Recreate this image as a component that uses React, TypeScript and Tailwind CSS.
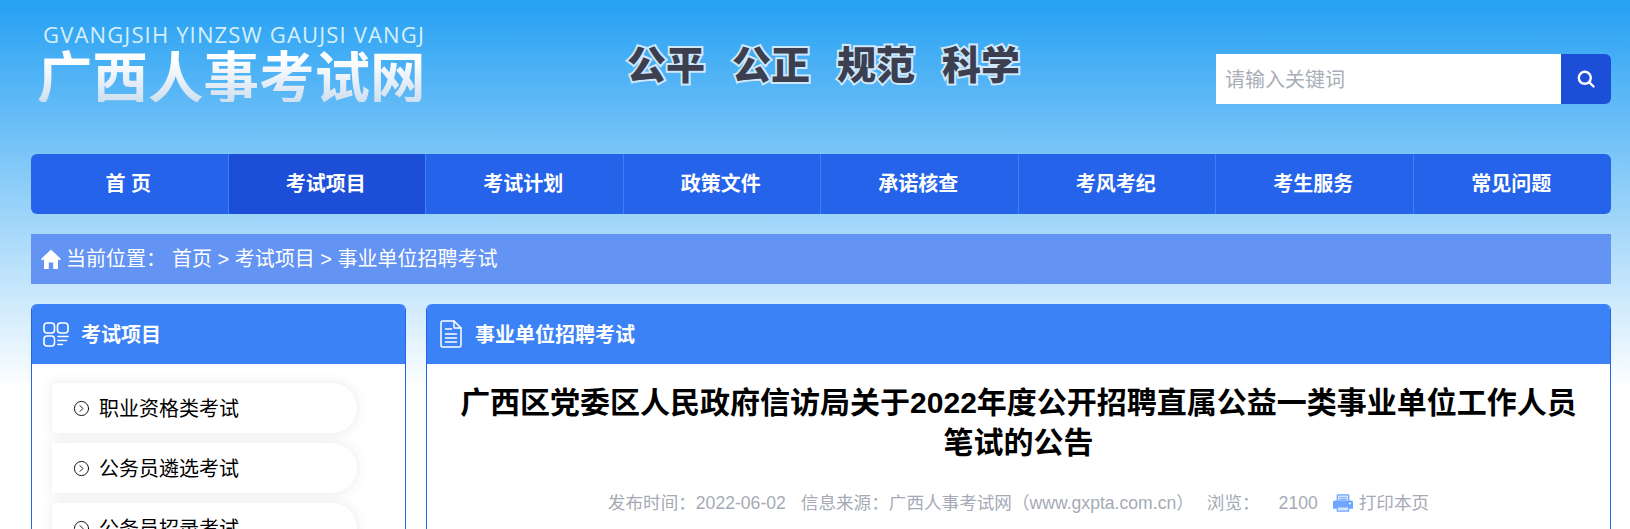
import { CircleChevronRight } from 'lucide-react';

const NAV = ['首 页', '考试项目', '考试计划', '政策文件', '承诺核查', '考风考纪', '考生服务', '常见问题'];
const EXAMS = ['职业资格类考试', '公务员遴选考试', '公务员招录考试'];

function SearchIcon() {
  return (
    <svg width="18" height="18" viewBox="0 0 18 18" fill="none" stroke="white" strokeWidth="2.4" strokeLinecap="round">
      <circle cx="7.8" cy="7.8" r="6" />
      <path d="M12.5 12.5L16.5 16.5" />
    </svg>
  );
}

function HomeIcon() {
  return (
    <svg width="20" height="20" viewBox="0 0 20 20" fill="white" className="mb-[1px] mr-[5px] shrink-0">
      <path d="M10 0.5L20 10L18.6 11.4L17 10V20H12.2V13.5H7.8V20H3V10L1.4 11.4L0 10Z" />
    </svg>
  );
}

function PrintIcon() {
  return (
    <svg width="20" height="18" viewBox="0 0 21 18" className="ml-[15px] shrink-0">
      <path d="M4.5 7V1.2C4.5 0.8 4.8 0.5 5.2 0.5H15.8C16.2 0.5 16.5 0.8 16.5 1.2V7" fill="#d5e4ff" stroke="#6ea5ff" strokeWidth="1.4" />
      <path d="M6.5 3.5H14.5M6.5 5.5H14.5" stroke="#6ea5ff" strokeWidth="1" />
      <path d="M2 6.5H19C20.1 6.5 21 7.4 21 8.5V15H0V8.5C0 7.4 0.9 6.5 2 6.5Z" fill="#6ea5ff" />
      <circle cx="17.8" cy="9.5" r="1" fill="white" />
      <path d="M4.5 13H16.5V17.5H4.5Z" fill="#d5e4ff" stroke="#6ea5ff" strokeWidth="1.2" />
    </svg>
  );
}

function GridIcon() {
  return (
    <svg width="26" height="25" viewBox="0 0 26 25" fill="none" stroke="white" strokeWidth="1.6" strokeLinecap="round" className="shrink-0">
      <rect x="1" y="1" width="10.5" height="10" rx="3" />
      <rect x="14.5" y="1" width="10.5" height="10" rx="3" />
      <rect x="1" y="14" width="10.5" height="10" rx="3" />
      <path d="M15 14.5H25M15 18.5H23.5M15 22.5H19.5" />
    </svg>
  );
}

function DocIcon() {
  return (
    <svg width="22" height="28" viewBox="0 0 22 28" fill="none" stroke="white" strokeWidth="1.5" strokeLinecap="round" strokeLinejoin="round" className="shrink-0">
      <path d="M2.5 1H14L21 8V25.5C21 26.4 20.4 27 19.5 27H2.5C1.6 27 1 26.4 1 25.5V2.5C1 1.6 1.6 1 2.5 1Z" />
      <path d="M14 1V8H21M5.5 9H11.5M5.5 14H16.5M5.5 18H16.5M5.5 22H16.5" />
    </svg>
  );
}

export default function App() {
  return (
    <div className="h-[529px] overflow-hidden bg-[linear-gradient(180deg,#25a0f3_0px,#ffffff_390px)] font-['Liberation_Sans','Noto_Sans_CJK_SC',sans-serif]">
      <div className="ml-[31px] w-[1580px]">
        <header className="flex h-[154px] items-start">
          <div className="ml-[6px] mt-[22px] w-[400px]">
            <div className="ml-[6px] font-['Open_Sans',sans-serif] text-[22px] leading-[24px] tracking-[1.15px] whitespace-nowrap text-[#d6effd]">
              GVANGJSIH YINZSW GAUJSI VANGJ
            </div>
            <div className="bg-[linear-gradient(180deg,#ffffff_25%,#cfdff0_100%)] bg-clip-text font-['Noto_Sans_CJK_SC',sans-serif] text-[55.5px] leading-[56px] font-bold whitespace-nowrap text-transparent">
              广西人事考试网
            </div>
          </div>
          <div className="ml-[190px] mt-[37px] flex gap-[27px] font-['Noto_Sans_CJK_SC',sans-serif] text-[39px] leading-[50px] font-black whitespace-nowrap text-[#3b3f50] [-webkit-text-stroke:4px_#cfe8fb] [paint-order:stroke_fill]">
            <span>公平</span>
            <span>公正</span>
            <span>规范</span>
            <span>科学</span>
          </div>
          <div className="ml-auto mt-[54px] flex h-[50px] w-[395px]">
            <div className="flex flex-1 items-center bg-white pl-[9px] pt-[2px] text-[20px] text-[#a9adb8]">请输入关键词</div>
            <div className="flex w-[50px] items-center justify-center rounded-r-[6px] bg-[#1d4ed8]">
              <SearchIcon />
            </div>
          </div>
        </header>

        <nav className="grid h-[60px] grid-cols-8 overflow-hidden rounded-[6px] bg-[#2563eb]">
          {NAV.map((label, i) => (
            <div
              key={label}
              className={`flex items-center justify-center border-[#3b82f6] pr-[2px] text-[20px] font-bold text-white ${i < 7 ? 'border-r' : ''} ${i === 1 ? 'bg-[#1d4ed8]' : ''}`}
            >
              {label}
            </div>
          ))}
        </nav>

        <div className="mt-[20px] flex h-[50px] items-center whitespace-nowrap bg-[#6393f3] pl-[10px] text-[20px] text-white">
          <HomeIcon />
          <span>当前位置：</span>
          <span className="ml-[6px]">首页 &gt; 考试项目 &gt; 事业单位招聘考试</span>
        </div>

        <div className="mt-[20px] flex gap-[20px]">
          <aside className="h-[300px] w-[375px] shrink-0 overflow-hidden rounded-t-[6px] border-x border-[#2563eb] bg-white">
            <div className="-mx-px flex h-[60px] items-center gap-[12px] bg-[#3b82f6] pl-[12px] text-[20px] font-bold text-white">
              <GridIcon />
              <span className="pt-[2px]">考试项目</span>
            </div>
            <ul className="flex flex-col gap-[10px] pl-[20px] pt-[19px]">
              {EXAMS.map((exam) => (
                <li
                  key={exam}
                  className="flex h-[50px] w-[305px] items-center gap-[9px] rounded-r-[25px] bg-white pl-[21px] text-[20px] text-black shadow-[0_0_14px_rgba(0,0,0,0.09)]"
                >
                  <CircleChevronRight size={17} strokeWidth={1.3} />
                  <span className="pt-[2px]">{exam}</span>
                </li>
              ))}
            </ul>
          </aside>

          <main className="h-[300px] flex-1 overflow-hidden rounded-t-[6px] border-x border-[#2563eb] bg-white">
            <div className="-mx-px flex h-[60px] items-center gap-[13px] bg-[#3b82f6] pl-[14px] text-[20px] font-bold text-white">
              <DocIcon />
              <span className="pt-[2px]">事业单位招聘考试</span>
            </div>
            <h1 className="px-[30px] pt-[19px] text-center text-[30px] leading-[40px] font-bold text-black">
              广西区党委区人民政府信访局关于2022年度公开招聘直属公益一类事业单位工作人员笔试的公告
            </h1>
            <div className="mt-[20px] flex h-[40px] items-center justify-center whitespace-nowrap text-[17.6px] text-[#a6aab6]">
              <span>发布时间：2022-06-02</span>
              <span className="ml-[15px]">信息来源：广西人事考试网（www.gxpta.com.cn）</span>
              <span className="ml-[13px]">浏览：</span>
              <span className="ml-[19px]">2100</span>
              <PrintIcon />
              <span className="ml-[6px]">打印本页</span>
            </div>
          </main>
        </div>
      </div>
    </div>
  );
}
